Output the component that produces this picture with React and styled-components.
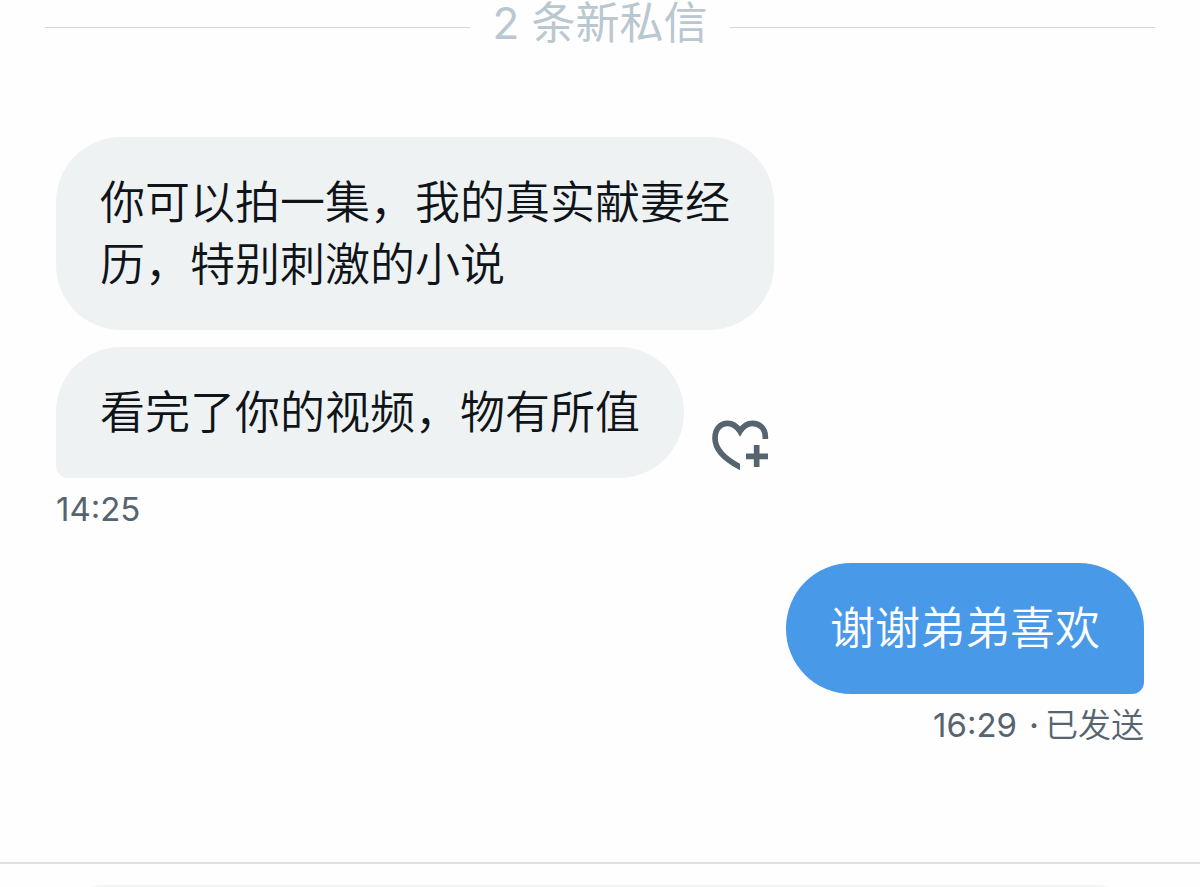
import React from 'react';
import styled, { createGlobalStyle } from 'styled-components';

const GlobalStyle = createGlobalStyle`
  * {
    box-sizing: border-box;
  }

  body {
    margin: 0;
    background: #fefefe;
    font-family: Inter, 'Noto Sans CJK SC', sans-serif;
    font-weight: 350;
  }
`

const Page = styled.div`
  display: flex;
  flex-direction: column;
  height: 100vh;
  overflow: hidden;
`

const Divider = styled.div`
  display: flex;
  align-items: center;
  gap: 22px;
  height: 54px;
  padding: 0 45px;

  &::before,
  &::after {
    content: '';
    flex: 1;
    height: 1px;
    background: #d3d8db;
  }
`

const DividerText = styled.span`
  padding-bottom: 8px;
  color: #b9c7d0;
  font-size: 44px;
  font-weight: 400;
  line-height: 46px;
`

const Messages = styled.main`
  display: flex;
  flex-direction: column;
  padding: 83px 56px 116px;
`

const Row = styled.div`
  display: flex;
  align-items: flex-end;
  justify-content: ${props => (props.$sent ? 'flex-end' : 'flex-start')};
  gap: 28px;
  margin-top: ${props => props.$gap || 0}px;
`

const Bubble = styled.div`
  max-width: 66%;
  padding: 35px 44px 34px;
  border-radius: 65px;
  border-bottom-left-radius: ${props => (props.$tail === 'left' ? 12 : 65)}px;
  border-bottom-right-radius: ${props => (props.$tail === 'right' ? 12 : 65)}px;
  background: ${props => (props.$sent ? '#4999e9' : '#eef2f3')};
  color: ${props => (props.$sent ? '#ffffff' : '#0f1419')};
  font-size: 45px;
  line-height: 62px;
`

const Meta = styled.div`
  display: flex;
  align-self: ${props => (props.$sent ? 'flex-end' : 'flex-start')};
  padding-top: 10px;
  color: #56646f;
  font-size: 33px;
  line-height: 42px;
`

const Time = styled.time`
  font-weight: 400;
`

const Dot = styled.span`
  padding: 0 6px 0 12px;
  font-weight: 500;
`

const ReactButton = styled.button`
  display: flex;
  margin: 0 0 6px;
  padding: 0;
  border: 0;
  background: none;
  color: #56646f;
`

const Composer = styled.footer`
  flex: none;
  padding: 21px 56px;
  border-top: 2px solid #dfe0e1;
`

const Field = styled.input`
  display: block;
  width: 100%;
  height: 96px;
  padding: 0 44px;
  border: 0;
  border-radius: 48px;
  background: #f2f5f6;
  font: inherit;
  font-size: 45px;
`

function HeartPlus() {
  return (
    <svg width="58" height="52" viewBox="66 60 174 156" fill="none" stroke="currentColor" strokeWidth="17">
      <clipPath id="heart-cut">
        <path d="M60 50H240V117H150V216H60Z" />
      </clipPath>
      <path
        clipPath="url(#heart-cut)"
        d="M226 125V110C226 86 209 70 187 70C172 70 160 78 150 94C140 78 128 70 113 70C91 70 75 87 75 114C75 147 100 175 150 201L166 209"
      />
      <path d="M168 169H234M200 135V201" />
    </svg>
  );
}

function App() {
  return (
    <Page>
      <GlobalStyle />
      <Divider>
        <DividerText>2 条新私信</DividerText>
      </Divider>
      <Messages>
        <Row>
          <Bubble>你可以拍一集，我的真实献妻经历，特别刺激的小说</Bubble>
        </Row>
        <Row $gap={17}>
          <Bubble $tail="left">看完了你的视频，物有所值</Bubble>
          <ReactButton type="button" aria-label="添加回应">
            <HeartPlus />
          </ReactButton>
        </Row>
        <Meta>
          <Time>14:25</Time>
        </Meta>
        <Row $sent $gap={33}>
          <Bubble $sent $tail="right">谢谢弟弟喜欢</Bubble>
        </Row>
        <Meta $sent>
          <Time>16:29</Time>
          <Dot>·</Dot>
          <span>已发送</span>
        </Meta>
      </Messages>
      <Composer>
        <Field type="text" aria-label="私信" />
      </Composer>
    </Page>
  );
}

export default App;
